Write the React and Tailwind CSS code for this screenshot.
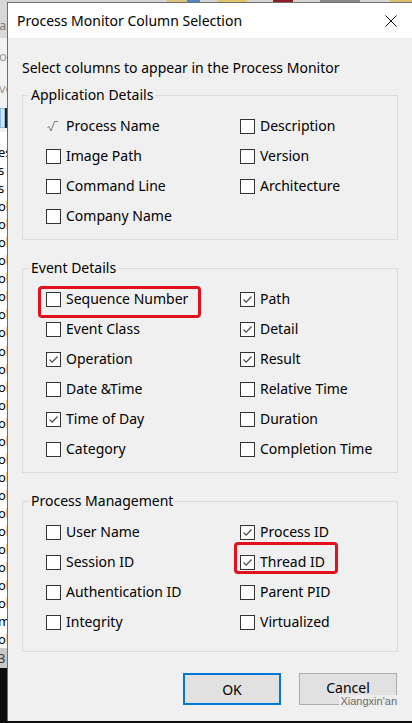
import React from "react";

const font = "font-['Noto_Sans','Liberation_Sans',sans-serif]";

// each group is filled row by row: left cell, right cell
const applicationDetails = [
  { label: "Process Name", state: "dim" },
  { label: "Description" },
  { label: "Image Path" },
  { label: "Version" },
  { label: "Command Line" },
  { label: "Architecture" },
  { label: "Company Name" },
  null,
];

const eventDetails = [
  { label: "Sequence Number", mark: "seq" },
  { label: "Path", state: "on" },
  { label: "Event Class" },
  { label: "Detail", state: "on" },
  { label: "Operation", state: "on" },
  { label: "Result", state: "on" },
  { label: "Date &Time" },
  { label: "Relative Time" },
  { label: "Time of Day", state: "on" },
  { label: "Duration" },
  { label: "Category" },
  { label: "Completion Time" },
];

const processManagement = [
  { label: "User Name" },
  { label: "Process ID", state: "on" },
  { label: "Session ID" },
  { label: "Thread ID", state: "on", mark: "thread" },
  { label: "Authentication ID" },
  { label: "Parent PID" },
  { label: "Integrity" },
  { label: "Virtualized" },
];

const listTail = Array.from({ length: 28 }, (_, i) =>
  i === 0 ? "es" : i < 3 ? "s" : i === 26 ? "m" : "ol"
);

const Box = ({ state }) => {
  if (state === "dim") {
    return (
      <svg width="15" height="15" viewBox="0 0 15 15" className="shrink-0">
        <polyline points="1.5,8.5 3,7.5 5,12 8.5,2.5 12,2.5" fill="none" stroke="#7a7a7a" strokeWidth="1" />
      </svg>
    );
  }
  return (
    <span className="w-[15px] h-[15px] shrink-0 border border-[#333333] bg-white flex items-center justify-center">
      {state === "on" && (
        <svg width="13" height="13" viewBox="0 0 13 13">
          <polyline points="2.5,6.5 5.2,9.2 10.5,3.5" fill="none" stroke="#4a4a4a" strokeWidth="1.2" />
        </svg>
      )}
    </span>
  );
};

const Item = ({ item }) => {
  if (!item) return <div className="h-[30px]" />;
  return (
    <div className="relative h-[30px] flex items-center gap-[5px]">
      <Box state={item.state} />
      <span className="text-[14px] leading-[20px] text-black whitespace-nowrap">{item.label}</span>
      {/* red annotation frames drawn over the dialog */}
      {item.mark === "seq" && (
        <span className="absolute left-[-8px] top-[2px] w-[163px] h-[32px] border-[3px] border-[#e3111b] rounded-[4px]" />
      )}
      {item.mark === "thread" && (
        <span className="absolute left-[-6px] top-[-5px] w-[104px] h-[32px] border-[3px] border-[#e3111b] rounded-[4px]" />
      )}
    </div>
  );
};

const Group = ({ title, items, last }) => (
  <fieldset className={`mx-[14px] border border-[#dcdcdc] p-0 ${last ? "pb-[14px]" : "pb-[8px]"}`}>
    <legend className="ml-[6px] px-[2px] text-[14px] leading-[20px] text-black">{title}</legend>
    <div className="grid grid-cols-[194px_1fr] pl-[23px] pt-[6px]">
      {items.map((item, i) => (
        <Item key={i} item={item} />
      ))}
    </div>
  </fieldset>
);

const BackgroundStrip = () => (
  <div className="w-[7px] shrink-0 overflow-hidden flex flex-col text-[13px] text-black">
    <div className="h-[36px] bg-[#d8d8d8] flex items-end pb-[3px] text-[#7d7d7d] whitespace-nowrap">
      <span className="-ml-[1px]">as</span>
    </div>
    <div className="h-[66px] bg-[#f2f2f2] flex flex-col text-[#9a9a9a] whitespace-nowrap">
      <span className="mt-[8px] -ml-[1px] leading-[20px]">o</span>
      <span className="mt-[12px] -ml-[1px] leading-[20px]">ve</span>
    </div>
    <div className="h-[28px] bg-[#f2f2f2] pt-[4px] flex">
      <span className="h-[20px] w-[5px] bg-[#d4e6f7] border border-[#8ebbe6]" />
      <span className="h-[20px] w-[2px] bg-[#222222]" />
    </div>
    <div className="h-[11px] bg-white" />
    <div className="bg-white flex flex-col whitespace-nowrap">
      {listTail.map((t, i) => (
        <span key={i} className="h-[18.05px] leading-[18px] -ml-[2px]">
          {t}
        </span>
      ))}
    </div>
    <div className="h-[20px] bg-[#c9c9c9] leading-[20px] -ml-[2px] text-[#333333]">3</div>
    <div className="flex-1 bg-[#0d0d0d]" />
  </div>
);

const App = () => {
  return (
    <div className={`w-[412px] h-[723px] overflow-hidden flex flex-col bg-[#0d0d0d] ${font}`}>
      {/* thumbnails of the window behind the dialog */}
      <div className="h-[2px] flex bg-[#d5d5d5]">
        <div className="w-[167px]" />
        <div className="w-[20px] bg-[#d9c27a]" />
        <div className="w-[13px] bg-[#4f86c6]" />
        <div className="w-[17px]" />
        <div className="w-[30px] bg-[#e0c56a]" />
        <div className="w-[26px]" />
        <div className="w-[20px] bg-[#8e1c24]" />
        <div className="w-[27px]" />
        <div className="w-[40px] bg-[#8a8a8a]" />
        <div className="w-[30px]" />
        <div className="flex-1 bg-[#d9bf6e]" />
      </div>

      <div className="h-[719px] flex">
        <BackgroundStrip />

        <div className="flex-1 flex flex-col border-l border-t border-[#6e6e6e] bg-[#f0f0f0]">
          <div className="h-[35px] bg-white flex items-center justify-between pl-[9px] pr-[15px]">
            <span className="text-[14px] leading-[20px] text-black">Process Monitor Column Selection</span>
            <svg width="12" height="12" viewBox="0 0 12 12">
              <path d="M0.5 0.5 L11.5 11.5 M11.5 0.5 L0.5 11.5" stroke="#111111" strokeWidth="1" />
            </svg>
          </div>

          <div className="flex-1 flex flex-col pt-[20px]">
            <p className="pl-[14px] text-[14px] leading-[20px] text-black">
              Select columns to appear in the Process Monitor
            </p>
            <div className="mt-[7px] flex flex-col gap-[18px]">
              <Group title="Application Details" items={applicationDetails} />
              <Group title="Event Details" items={eventDetails} />
              <Group title="Process Management" items={processManagement} last />
            </div>

            <div className="relative mt-[21px] flex justify-end gap-[18px] pr-[15px]">
              <button className="w-[98px] h-[32px] bg-[#e1e1e1] border-2 border-[#0078d7] text-[14px] text-black">
                OK
              </button>
              <button className="w-[98px] h-[32px] bg-[#e1e1e1] border border-[#adadad] pb-[4px] text-[14px] text-black">
                Cancel
              </button>
              {/* watermark sitting over the Cancel button */}
              <span className="absolute right-[14px] top-[22px] px-[1px] bg-[#ededed] text-[11px] leading-[12px] text-[#6b6b6b] font-['Liberation_Sans',sans-serif]">
                Xiangxin'an
              </span>
            </div>
          </div>
        </div>
      </div>
    </div>
  );
};

export default App;
